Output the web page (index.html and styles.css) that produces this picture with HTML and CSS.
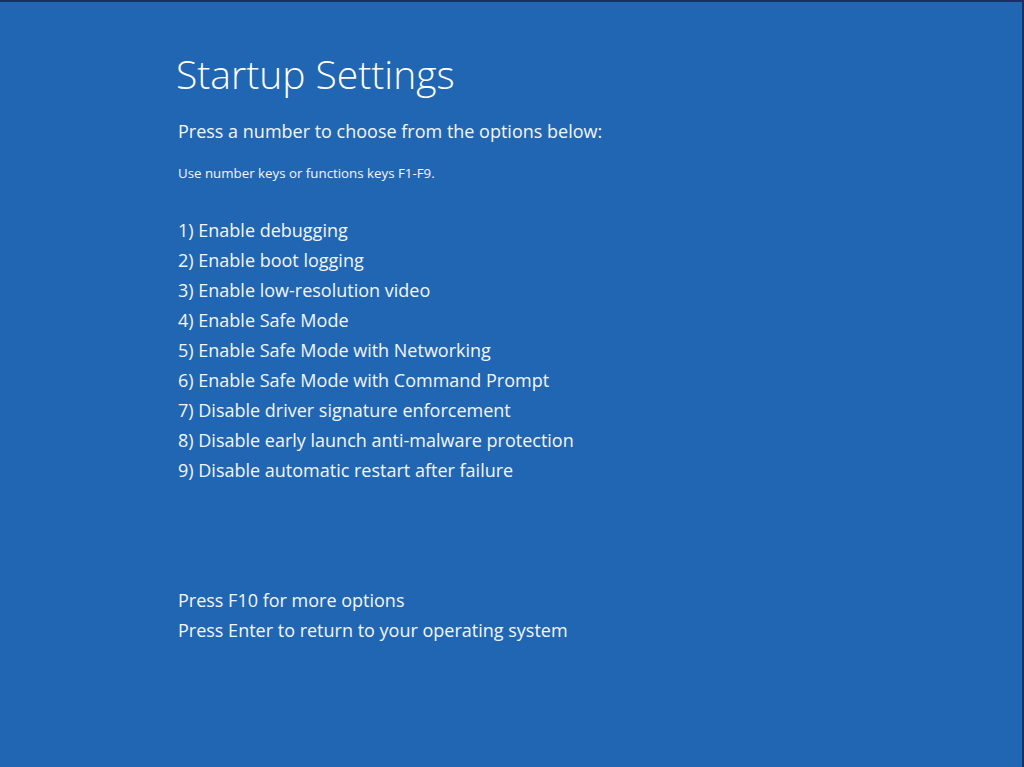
FILE: index.html
```html
<!DOCTYPE html>
<html lang="en">
<head>
    <meta charset="UTF-8">
    <meta name="viewport" content="width=device-width, initial-scale=1.0">
    <title>Startup Settings</title>
    <link rel="stylesheet" href="styles.css">
</head>
<body>

    <div class="screen">
        <h1 class="title">Startup Settings</h1>
        <p class="lead">Press a number to choose from the options below:</p>
        <p class="hint">Use number keys or functions keys F1-F9.</p>

        <ul class="options">
            <li>1) Enable debugging</li>
            <li>2) Enable boot logging</li>
            <li>3) Enable low-resolution video</li>
            <li>4) Enable Safe Mode</li>
            <li>5) Enable Safe Mode with Networking</li>
            <li>6) Enable Safe Mode with Command Prompt</li>
            <li>7) Disable driver signature enforcement</li>
            <li>8) Disable early launch anti-malware protection</li>
            <li>9) Disable automatic restart after failure</li>
        </ul>

        <ul class="options footer">
            <li>Press F10 for more options</li>
            <li>Press Enter to return to your operating system</li>
        </ul>
    </div>

</body>
</html>
```

FILE: styles.css
```css
html,
body {
    margin: 0;
    height: 100%;
}

body {
    background-color: #2166b3;
    color: #f2f6fb;
    font-family: "Open Sans", "Noto Sans", sans-serif;
    overflow: hidden;
    /* thin dark frame along the top and right edge */
    border-top: 2px solid #1b2f66;
    border-right: 2px solid #173063;
    box-sizing: border-box;
}

.screen {
    padding: 47px 0 0 176px;
}

.title {
    margin: 0;
    font-size: 39px;
    font-weight: 300;
    line-height: 50px;
    color: #fff;
}

.lead {
    margin: 17px 0 0 2px;
    font-size: 18px;
    font-weight: 400;
    line-height: 30px;
}

.hint {
    margin: 17px 0 0 2px;
    font-size: 13.3px;
    line-height: 20px;
}

.options {
    list-style: none;
    margin: 32px 0 0 2px;
    padding: 0;
    font-size: 18px;
    line-height: 30px;
}

.footer {
    margin-top: 100px;
}
```
